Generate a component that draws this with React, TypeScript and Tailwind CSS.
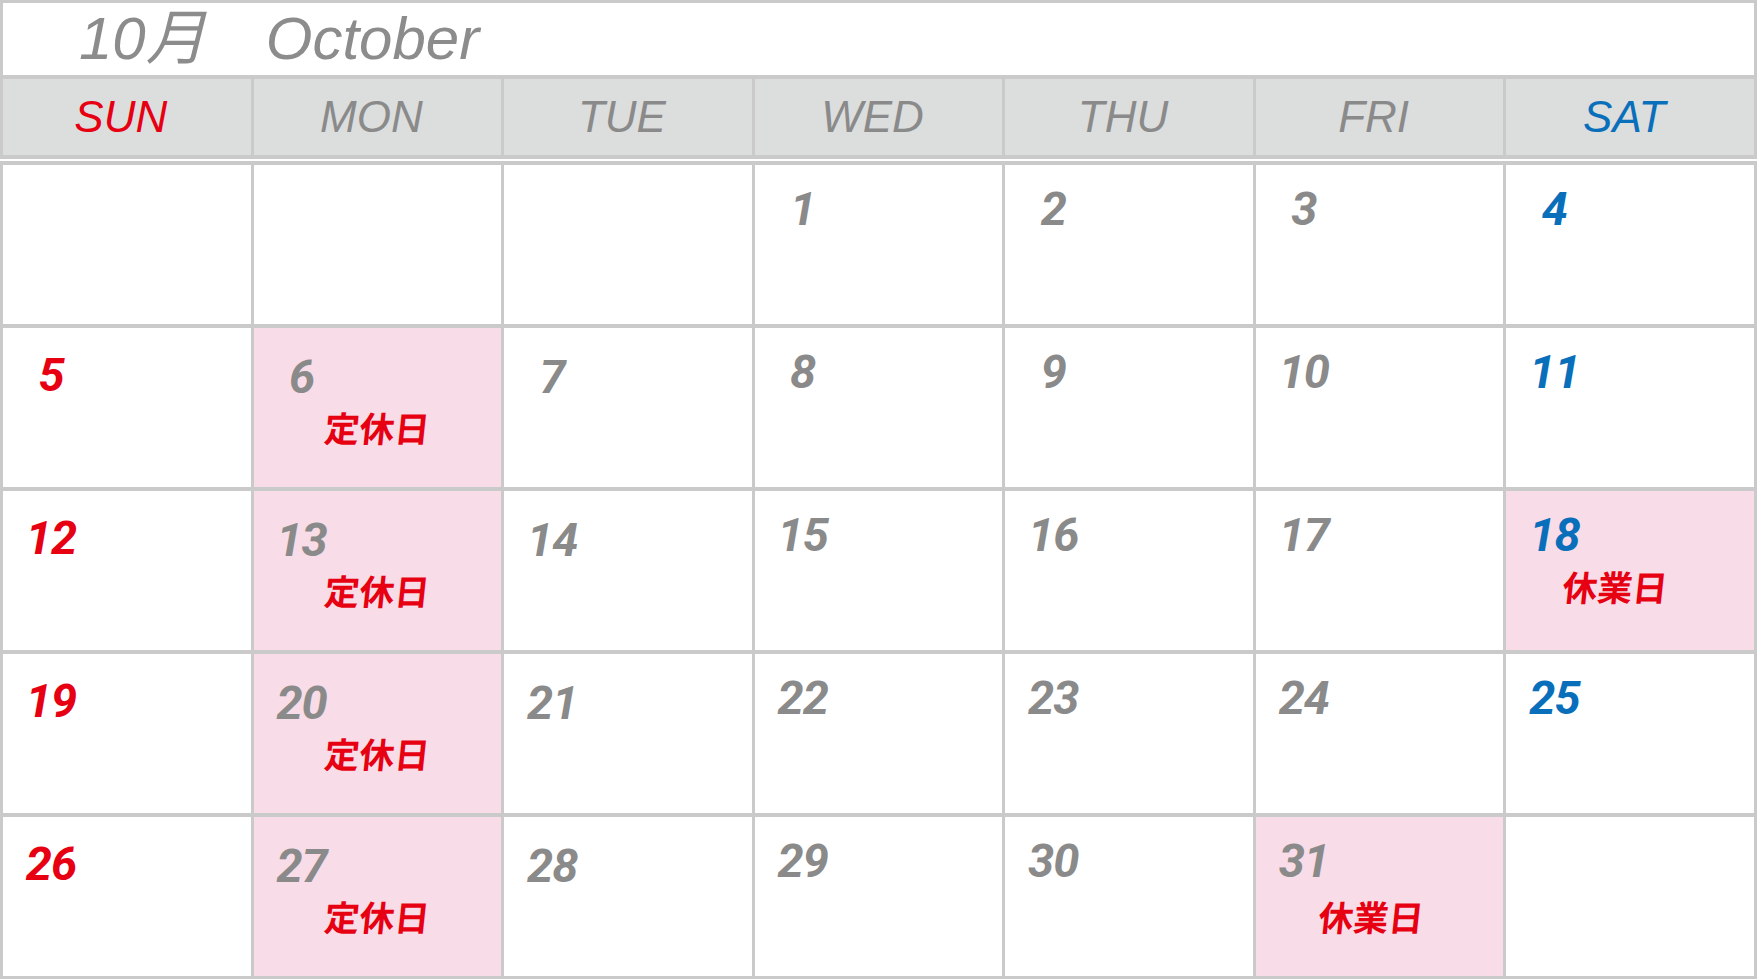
import React from "react";

type Day = {
  n?: number;
  label?: string;
};

const DAY_NAMES = ["SUN", "MON", "TUE", "WED", "THU", "FRI", "SAT"];

const WEEKS: Day[][] = [
  [{}, {}, {}, { n: 1 }, { n: 2 }, { n: 3 }, { n: 4 }],
  [{ n: 5 }, { n: 6, label: "定休日" }, { n: 7 }, { n: 8 }, { n: 9 }, { n: 10 }, { n: 11 }],
  [{ n: 12 }, { n: 13, label: "定休日" }, { n: 14 }, { n: 15 }, { n: 16 }, { n: 17 }, { n: 18, label: "休業日" }],
  [{ n: 19 }, { n: 20, label: "定休日" }, { n: 21 }, { n: 22 }, { n: 23 }, { n: 24 }, { n: 25 }],
  [{ n: 26 }, { n: 27, label: "定休日" }, { n: 28 }, { n: 29 }, { n: 30 }, { n: 31, label: "休業日" }, {}],
];

// colour for a weekday column
const colColor = (col: number) => {
  if (col === 0) return "text-[#e60012]";
  if (col === 6) return "text-[#0a6fba]";
  return "text-[#8a8a8a]";
};

// numbers in the first three columns sit a little lower
const numPad = (col: number) => {
  if (col === 0) return "pt-[23px]";
  if (col <= 2) return "pt-[25px]";
  return "pt-[20px]";
};

// 休業日 labels sit a bit left of centre
const labelPad = (col: number) => {
  if (col === 6) return "pr-[30px] mt-[-4px]";
  if (col === 5) return "pr-[16px]";
  return "";
};

const DayCell = ({ day, col }: { day: Day; col: number }) => {
  return (
    <div className={`flex flex-col ${day.label ? "bg-[#f8dce7]" : "bg-white"}`}>
      <div className="h-[81px]">
        {day.n && (
          <div
            className={`w-[96px] text-center text-[47px] leading-none font-bold italic tracking-[-1px] font-['Roboto',sans-serif] ${numPad(col)} ${colColor(col)}`}
          >
            {day.n}
          </div>
        )}
      </div>
      {day.label && (
        <div
          className={`text-center text-[35px] leading-none font-bold text-[#e60012] font-['Noto_Sans_CJK_JP',sans-serif] ${labelPad(col)}`}
        >
          <span className="inline-block -skew-x-6">{day.label}</span>
        </div>
      )}
    </div>
  );
};

const App = () => {
  return (
    <div className="w-[1757px] h-[979px] flex flex-col bg-white">
      <div className="h-[75px] border-t-[3px] border-x-[3px] border-[#cacaca] flex items-center pl-[76px] pb-[1px]">
        <h1 className="text-[60px] leading-none italic text-[#8c8c8c] font-['Liberation_Sans','Noto_Sans_CJK_JP',sans-serif]">
          10月　October
        </h1>
      </div>

      <div className="bg-[#cacaca] px-[3px] py-[4px] grid grid-cols-7 gap-x-[3px]">
        {DAY_NAMES.map((d, i) => (
          <div
            key={d}
            className={`h-[76px] bg-[#dcdddd] flex items-center justify-center pr-[12px] text-[44px] italic font-['Liberation_Sans',sans-serif] ${colColor(i)}`}
          >
            {d}
          </div>
        ))}
      </div>

      <div className="h-[2px] bg-white" />

      <div className="flex-1 bg-[#cacaca] px-[3px] pt-[4px] pb-[3px] grid grid-cols-7 grid-rows-5 gap-x-[3px] gap-y-[4px]">
        {WEEKS.map((week, w) =>
          week.map((day, i) => <DayCell key={`${w}-${i}`} day={day} col={i} />)
        )}
      </div>
    </div>
  );
};

export default App;
